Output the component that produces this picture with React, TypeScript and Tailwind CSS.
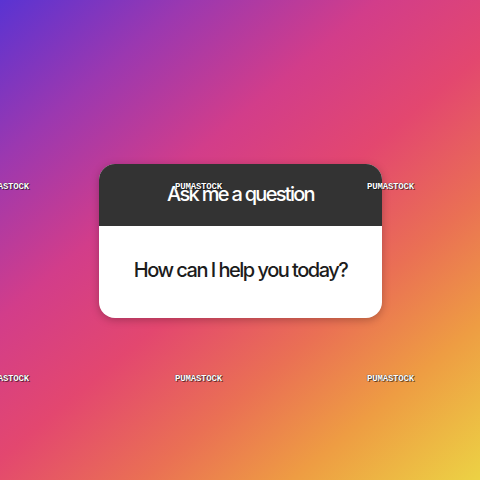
export default function App() {
  const marks = [
    { x: -18, y: 183 },
    { x: 175, y: 183 },
    { x: 367, y: 183 },
    { x: -18, y: 375 },
    { x: 175, y: 375 },
    { x: 367, y: 375 },
  ];

  return (
    <div className="relative h-[480px] w-[480px] overflow-hidden bg-[linear-gradient(140deg,#5a33d2_0%,#9b38b0_18%,#d23d8a_36%,#e3476f_52%,#ea7054_68%,#ee9c43_82%,#ecd244_100%)] font-['Inter','Liberation_Sans',sans-serif]">
      <div className="flex h-full items-center justify-center pt-[2px] pl-[1px]">
        <div className="w-[283px] overflow-hidden rounded-[16px] bg-white shadow-[0_2px_8px_rgba(0,0,0,0.25)]">
          <div className="flex h-[62px] items-center justify-center bg-[#333333] pb-[3px]">
            <span className="text-[20px] font-medium tracking-[-0.085em] text-white">Ask me a question</span>
          </div>
          <div className="flex h-[92px] items-center justify-center pb-[4px]">
            <span className="text-[20px] font-medium tracking-[-0.075em] text-[#1c1c1c]">How can I help you today?</span>
          </div>
        </div>
      </div>

      {marks.map((m, i) => (
        <span
          key={i}
          className="absolute font-['Liberation_Mono',monospace] text-[9px] font-bold leading-none tracking-[-0.02em] text-white [text-shadow:0_0_1px_rgba(0,0,0,0.9),1px_1px_0_rgba(0,0,0,0.5)]"
          style={{ left: m.x, top: m.y }}
        >
          PUMASTOCK
        </span>
      ))}
    </div>
  );
}
